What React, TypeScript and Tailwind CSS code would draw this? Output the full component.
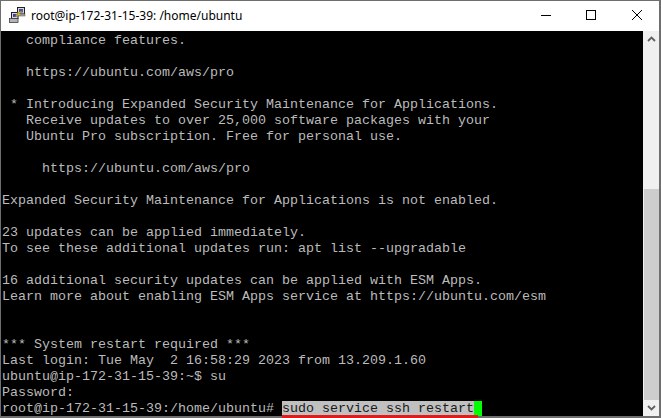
import React from 'react';

const LINES = [
  '   compliance features.',
  '',
  '   https://ubuntu.com/aws/pro',
  '',
  ' * Introducing Expanded Security Maintenance for Applications.',
  '   Receive updates to over 25,000 software packages with your',
  '   Ubuntu Pro subscription. Free for personal use.',
  '',
  '     https://ubuntu.com/aws/pro',
  '',
  'Expanded Security Maintenance for Applications is not enabled.',
  '',
  '23 updates can be applied immediately.',
  'To see these additional updates run: apt list --upgradable',
  '',
  '16 additional security updates can be applied with ESM Apps.',
  'Learn more about enabling ESM Apps service at https://ubuntu.com/esm',
  '',
  '',
  '*** System restart required ***',
  'Last login: Tue May  2 16:58:29 2023 from 13.209.1.60',
  'ubuntu@ip-172-31-15-39:~$ su',
  'Password:',
];

function PuttyIcon() {
  return (
    <svg width="18" height="18" viewBox="0 0 18 18" className="mb-0.5 shrink-0">
      {/* back computer */}
      <rect x="8.5" y="1.5" width="7" height="6.5" fill="#d4d4e4" stroke="#202020" />
      <rect x="10" y="3" width="4" height="3.5" fill="#4a50a8" />
      <rect x="9" y="8" width="7" height="2" fill="#a8a8a8" stroke="#505050" strokeWidth="0.5" />
      {/* front computer */}
      <rect x="2.5" y="6.5" width="6.5" height="6" fill="#d4d4e4" stroke="#202020" />
      <rect x="4" y="8" width="3.5" height="3" fill="#3a3fa0" />
      <rect x="0.5" y="12.5" width="8.5" height="4" fill="#b4b4b4" stroke="#404040" strokeWidth="0.8" />
      {/* bolt */}
      <path d="M14 4.5 L8 7 L9.5 8 L5.5 10.5 L11.5 8.8 L10.2 7.5 Z" fill="#f2e21c" stroke="#8a7a10" strokeWidth="0.4" />
    </svg>
  );
}

export default function App() {
  return (
    <div className="relative h-[418px] w-[661px] overflow-hidden bg-[#6e6e6e] pt-px pr-0.5 pb-0.5 pl-px">
      {/* Title bar */}
      <div className="flex h-[30px] items-center bg-white pl-2">
        <PuttyIcon />
        <span className="ml-1 font-['Noto_Sans',sans-serif] text-[12px] whitespace-pre text-black">
          root@ip-172-31-15-39: /home/ubuntu
        </span>
        <div className="mb-0.5 ml-auto flex items-center">
          <svg width="12" height="12" viewBox="0 0 12 12" className="mr-[33px]">
            <path d="M1 6.5 H11" stroke="#000" strokeWidth="1" />
          </svg>
          <svg width="12" height="12" viewBox="0 0 12 12" className="mr-[34px]">
            <rect x="1.5" y="1.5" width="9" height="9" fill="none" stroke="#000" strokeWidth="1" />
          </svg>
          <svg width="12" height="12" viewBox="0 0 12 12" className="mr-4">
            <path d="M1 1 L11 11 M11 1 L1 11" stroke="#000" strokeWidth="1" />
          </svg>
        </div>
      </div>

      <div className="flex h-[385px]">
        {/* Terminal */}
        <div className="flex-1 overflow-hidden bg-black pt-0.5 pl-px font-['Liberation_Mono',monospace] text-[13.33px] leading-[16px] text-[#bbbbbb]">
          {LINES.map((line, i) => (
            <div key={i} className="h-4 whitespace-pre">
              {line}
            </div>
          ))}
          <div className="flex h-4 whitespace-pre">
            <span>root@ip-172-31-15-39:/home/ubuntu# </span>
            <span className="bg-[#c0c0c0] text-[#1a1a1a]">sudo service ssh restart</span>
            <span className="w-2 bg-[#00ff00]" />
          </div>
        </div>

        {/* Scrollbar */}
        <div className="flex w-4 flex-col bg-[#f0f0f0]">
          <div className="flex h-4 items-center justify-center">
            <svg width="9" height="6" viewBox="0 0 9 6">
              <path d="M1 5 L4.5 1.5 L8 5" fill="none" stroke="#606060" strokeWidth="1.8" />
            </svg>
          </div>
          <div className="mt-[142px] ml-px h-[211px] w-[15px] bg-[#cdcdcd]" />
          <div className="mt-auto flex h-4 items-center justify-center">
            <svg width="9" height="6" viewBox="0 0 9 6">
              <path d="M1 1 L4.5 4.5 L8 1" fill="none" stroke="#606060" strokeWidth="1.8" />
            </svg>
          </div>
        </div>
      </div>

      {/* Red annotation under the command */}
      <div className="absolute top-[415px] left-[282px] h-[3px] w-[196px] bg-[#e01b1b]" />
    </div>
  );
}
